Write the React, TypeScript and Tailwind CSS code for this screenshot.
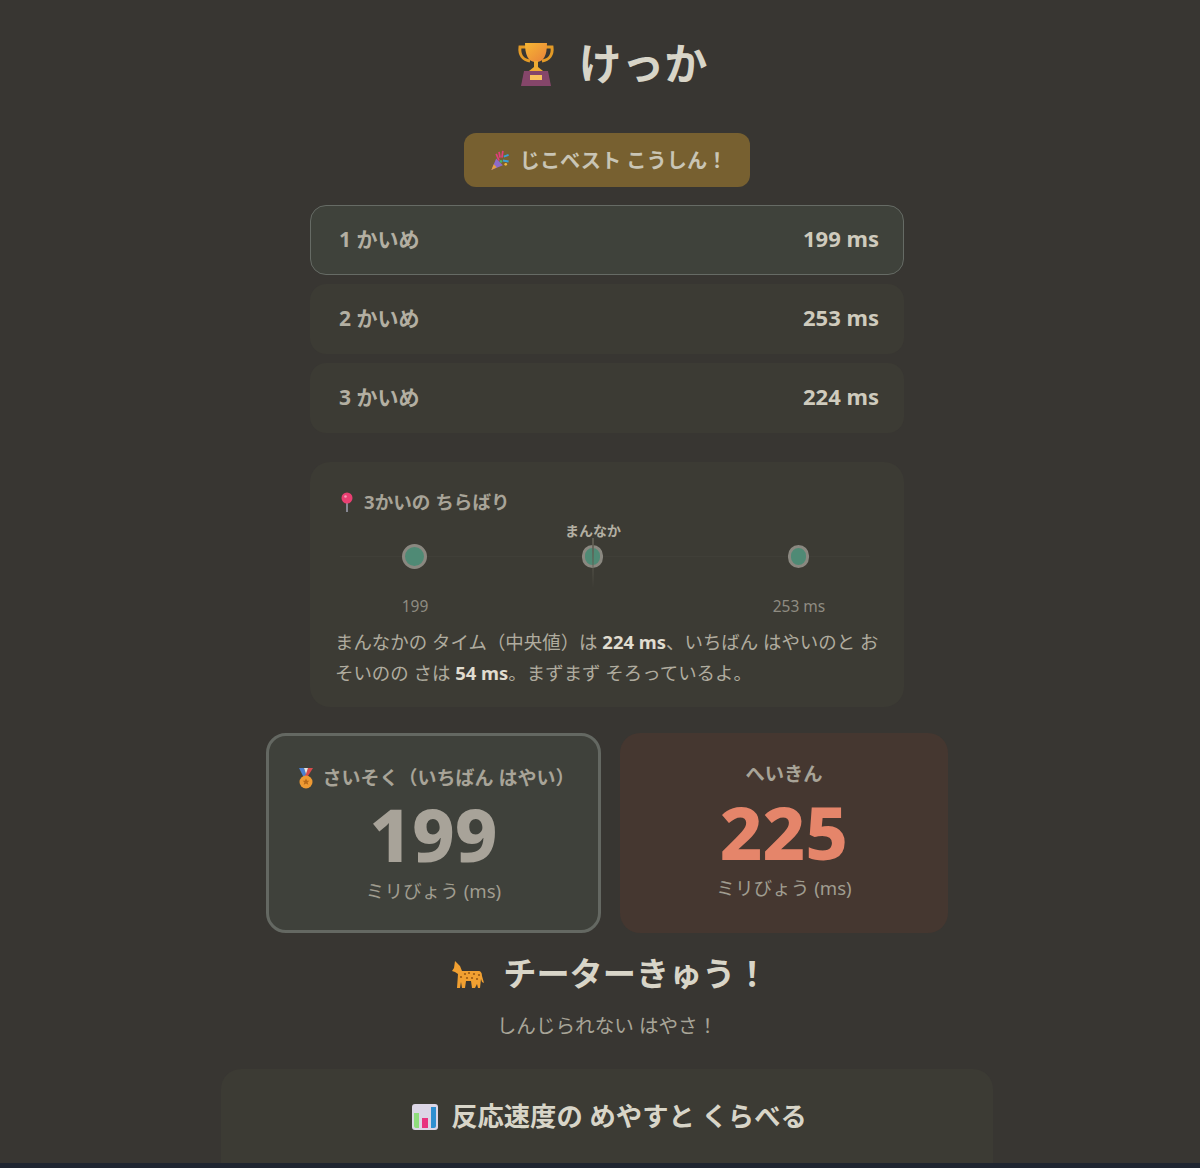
const Trophy = () => (
  <svg viewBox="0 0 38 44" className="h-[44px] w-[38px]">
    <defs>
      <linearGradient id="cup" x1="0" y1="0" x2="1" y2="1">
        <stop offset="0" stopColor="#f7b733" />
        <stop offset="1" stopColor="#e8813a" />
      </linearGradient>
    </defs>
    <path d="M9 5H3c-1 8 3 13 10 14M29 5h6c1 8-3 13-10 14" fill="none" stroke="#e39a26" strokeWidth="3" />
    <path d="M8 1h22c0 12-3 19-11 19S8 13 8 1z" fill="url(#cup)" />
    <path d="M17 19h4v6l5 4H12l5-4z" fill="#eeaa32" />
    <path d="M7 29h24l3 15H4z" fill="#85466a" />
    <rect x="13" y="33" width="12" height="5" fill="#f8c05c" />
  </svg>
);

const Popper = () => (
  <svg viewBox="0 0 20 22" className="h-[21px] w-[20px]">
    <path d="M1 21l5-12 7 7z" fill="#8d6ac8" />
    <path d="M1 21l2.5-6 3 3z" fill="#e8a13a" />
    <path d="M9 2l1 6M13 1l-1 7M6 4l3 7" stroke="#e23d7c" strokeWidth="1.8" fill="none" />
    <path d="M14 7l5-2M13 11l6 1" stroke="#3aa0d8" strokeWidth="2" fill="none" />
    <circle cx="16" cy="15" r="1.4" fill="#f0b53a" />
    <circle cx="11" cy="12" r="1.4" fill="#47b36b" />
  </svg>
);

const Pin = () => (
  <svg viewBox="0 0 14 20" className="h-[20px] w-[14px]">
    <path d="M7 9v11" stroke="#9a9cac" strokeWidth="1.6" />
    <circle cx="7" cy="6" r="5.5" fill="#ea3f72" />
    <circle cx="5.5" cy="4.5" r="1.3" fill="#f79ab5" />
  </svg>
);

const Medal = () => (
  <svg viewBox="0 0 18 21" className="h-[21px] w-[18px]">
    <path d="M2 0h5l3 8H6z" fill="#4a7fd0" />
    <path d="M16 0h-5L8 8h3z" fill="#d84a4a" />
    <path d="M7 0h4L9 6z" fill="#e8e6e2" />
    <circle cx="9" cy="14" r="6.5" fill="#ee9a33" />
    <path d="M9 10.5l1.1 2.2h2.3l-1.8 1.6.7 2.4L9 15.4l-2.3 1.3.7-2.4-1.8-1.6h2.3z" fill="#b96a18" />
  </svg>
);

const Leopard = () => (
  <svg viewBox="0 0 33 27" className="h-[27px] w-[33px]">
    <path d="M3 0l2 2 3 3 2 5h16c3 0 4 2 4 5l2 7-2-1-1-3-1 9h-2l-1-4-2 4h-3l-1-7h-5l-1 7h-3l-1-6-1 6H5l1-14-3-2-3-1 2-3z" fill="#f1a031" />
    <g fill="#9a5a14">
      <circle cx="13" cy="13" r="1.1" />
      <circle cx="17" cy="12" r="1.1" />
      <circle cx="22" cy="13" r="1.1" />
      <circle cx="27" cy="14" r="1.1" />
      <circle cx="15" cy="17" r="1.1" />
      <circle cx="20" cy="17" r="1.1" />
      <circle cx="25" cy="18" r="1.1" />
      <circle cx="9" cy="16" r="1.1" />
    </g>
  </svg>
);

const BarChart = () => (
  <svg viewBox="0 0 26 26" className="h-[26px] w-[26px]">
    <rect width="26" height="26" rx="3" fill="#dcd6e6" />
    <path d="M2 9h5v15H4a2 2 0 0 1-2-2z" fill="#8fdc7c" />
    <rect x="10" y="14" width="6" height="10" fill="#e8337f" />
    <path d="M19 3h5v19a2 2 0 0 1-2 2h-3z" fill="#2f8fd0" />
  </svg>
);

const attempts = [
  { label: "1 かいめ", ms: "199 ms", best: true },
  { label: "2 かいめ", ms: "253 ms", best: false },
  { label: "3 かいめ", ms: "224 ms", best: false },
];

export default function App() {
  return (
    <div
      className="flex h-[1168px] flex-col overflow-hidden bg-[#383632] text-[#d8d5c8]"
      style={{ fontFamily: '"Noto Sans", "Noto Sans CJK JP", sans-serif' }}
    >
      <main className="flex min-h-0 flex-1 flex-col items-center overflow-hidden pl-[14px]">
        {/* Title */}
        <h1 className="mt-[33px] flex h-[62px] items-center gap-[24px] pl-[10px] text-[42.8px] font-bold leading-none">
          <Trophy />
          <span>けっか</span>
        </h1>

        <div className="mt-[38px] flex h-[54px] w-[286px] items-center justify-center gap-[10px] rounded-xl bg-[#776030] pl-[3px] pt-px text-[20.2px] font-bold text-[#c9c5b5]">
          <Popper />
          <span>じこベスト こうしん！</span>
        </div>

        {/* Attempts */}
        <div className="mt-[18px] flex w-[594px] flex-col gap-[9px]">
          {attempts.map((a) => (
            <div
              key={a.label}
              className={
                a.best
                  ? "flex h-[70px] items-center justify-between rounded-2xl border border-[#666b65] bg-[#3f423b] pl-[28px] pr-[24px] font-bold"
                  : "flex h-[70px] items-center justify-between rounded-2xl bg-[#3c3b34] pl-[29px] pr-[25px] font-bold"
              }
            >
              <span className="text-[21px] text-[#b3afa2]">{a.label}</span>
              <span className="pb-[3px] text-[22px] text-[#cfcbbd]">{a.ms}</span>
            </div>
          ))}
        </div>

        {/* Spread */}
        <section className="mt-[29px] flex h-[245px] w-[594px] flex-col rounded-[20px] bg-[#3c3b34] px-[26px] pt-[26px]">
          <div className="flex h-[28px] items-center gap-[10px] pl-[4px] text-[18.6px] font-bold text-[#a8a498]">
            <Pin />
            <span>3かいの ちらばり</span>
          </div>
          <div className="relative mt-[10px] h-[90px] text-[15.5px] text-[#8f8c82]">
            <div className="absolute left-[4px] right-[8px] top-[30px] h-px bg-[#403f38]" />
            <span className="absolute left-[227px] top-[-5px] w-[60px] text-center text-[14px] font-bold leading-[20px] text-[#b3afa2]">
              まんなか
            </span>
            <span className="absolute left-[66px] top-[18px] h-[25px] w-[25px] rounded-full border-[3px] border-[#8a8880] bg-[#4f8a75]" />
            <span className="absolute left-[246px] top-[19px] h-[23px] w-[21px] rounded-full border-[3px] border-[#8a8880] bg-[#4f8a75]" />
            <span className="absolute left-[452px] top-[19px] h-[23px] w-[21px] rounded-full border-[3px] border-[#8a8880] bg-[#4f8a75]" />
            <span className="absolute left-[256px] top-[12px] h-[50px] w-[2px] bg-gradient-to-b from-[#5f5d52] to-transparent" />
            <span className="absolute left-[49px] top-[69px] w-[60px] text-center leading-[22px]">199</span>
            <span className="absolute left-[423px] top-[69px] w-[80px] text-center leading-[22px]">253 ms</span>
          </div>
          <p className="-ml-px mt-[10px] w-[548px] text-[18.45px] leading-[31px] text-[#b0ac9f]">
            まんなかの タイム（中央値）は <b className="text-[#e0ddd0]">224 ms</b>、いちばん はやいのと おそいのの さは{" "}
            <b className="text-[#e0ddd0]">54 ms</b>。まずまず そろっているよ。
          </p>
        </section>

        {/* Best and average */}
        <div className="mt-[26px] flex gap-[19px]">
          <div className="flex h-[200px] w-[335px] flex-col items-center rounded-[20px] border-[3px] border-[#646862] bg-[#3f413b] pt-[28px]">
            <div className="flex h-[28px] items-center gap-[8px] pl-[4px] text-[19px] font-bold text-[#a8a498]">
              <Medal />
              <span>さいそく（いちばん はやい）</span>
            </div>
            <div className="mt-[2px] text-[74px] font-extrabold leading-[80px] text-[#a8a399]">199</div>
            <div className="mt-[3px] text-[18.6px] leading-[28px] text-[#a09d90]">ミリびょう (ms)</div>
          </div>
          <div className="flex h-[200px] w-[328px] flex-col items-center rounded-[20px] bg-[#453730] pt-[27px]">
            <div className="h-[28px] text-[19.3px] font-bold leading-[28px] text-[#a8a498]">へいきん</div>
            <div className="mt-[4px] text-[74px] font-extrabold leading-[80px] text-[#e5856a]">225</div>
            <div className="mt-[2px] text-[18.6px] leading-[28px] text-[#a09d90]">ミリびょう (ms)</div>
          </div>
        </div>

        {/* Rank */}
        <h2 className="mt-[19px] flex h-[44px] items-center gap-[18px] pl-[7px] text-[33.2px] font-bold">
          <Leopard />
          <span>チーターきゅう！</span>
        </h2>
        <p className="mt-[15px] h-[30px] text-[19.6px] leading-[30px] text-[#a8a598]">しんじられない はやさ！</p>

        {/* Comparison */}
        <section className="mt-[28px] w-[772px] flex-1 rounded-t-[20px] bg-[#3c3b34] pt-[29px]">
          <h3 className="flex h-[38px] items-center justify-center gap-[13px] pl-[5px] text-[26.3px] font-bold">
            <BarChart />
            <span>反応速度の めやすと くらべる</span>
          </h3>
        </section>
      </main>
      <div className="h-[5px] shrink-0 bg-[#1f2530]" />
    </div>
  );
}
